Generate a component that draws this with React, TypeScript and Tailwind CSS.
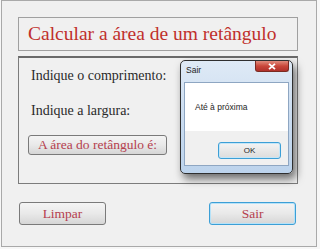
import React from "react";

const serif = "font-['Liberation_Serif',serif]";
const sans = "font-['Liberation_Sans',Arial,sans-serif]";

function WinButton({
  label,
  focused,
  className,
}: {
  label: string;
  focused?: boolean;
  className?: string;
}) {
  return (
    <button
      className={`flex items-center justify-center rounded-[3px] border bg-gradient-to-b from-[#f4f4f4] via-[#e9e9e9] to-[#d6d6d6] text-[#b5404e] ${serif} ${
        focused
          ? "border-[#3c9fd6] shadow-[inset_0_0_0_1px_#b6e2f8]"
          : "border-[#7a7a7a]"
      } ${className ?? ""}`}
    >
      {label}
    </button>
  );
}

export default function App() {
  return (
    <div className="h-[249px] w-[320px] bg-[#f7f7f7] pl-[1px]">
      <div className="relative h-[247px] w-[316px] border border-[#a9a9a9] bg-[#f0f0f0] px-[16px] pt-[16px]">
        {/* título */}
        <div
          className={`flex h-[34px] w-[280px] items-center border border-[#a0a0a0] pl-[9px] text-[19.5px] leading-none text-[#c0302c] ${serif}`}
        >
          Calcular a área de um retângulo
        </div>

        {/* painel */}
        <div className="mt-[5px] h-[128px] w-[280px] border border-t-2 border-[#7c7c7c] border-t-[#6a6a6a] pl-[12px] pt-[9px]">
          <div className={`text-[14px] leading-[18px] text-[#2a2a2a] ${serif}`}>
            Indique o comprimento:
          </div>
          <div className={`mt-[17px] text-[14px] leading-[18px] text-[#2a2a2a] ${serif}`}>
            Indique a largura:
          </div>
          <WinButton
            label="A área do retângulo é:"
            className="-ml-[3px] mt-[15px] h-[20px] w-[139px] text-[13.5px] leading-none"
          />
        </div>

        {/* botões */}
        <div className="mt-[18px] flex w-[280px] justify-between pl-[1px] pr-[2px]">
          <WinButton label="Limpar" className="h-[23px] w-[87px] text-[13.5px] leading-none" />
          <WinButton label="Sair" focused className="h-[23px] w-[87px] text-[13.5px] leading-none" />
        </div>

        {/* caixa de mensagem */}
        <div className="absolute left-[178px] top-[59px] flex h-[114px] w-[113px] flex-col rounded-[5px] border border-[#2f2f2f] bg-gradient-to-b from-[#dfeaf6] via-[#cadcf0] to-[#bcd3ec] px-[3px] pb-[7px] shadow-[3px_5px_8px_rgba(0,0,0,0.55)]">
          <div className="flex h-[21px] items-start justify-between">
            <span className={`mt-[5px] pl-[2px] text-[8.5px] leading-none text-[#1e1e1e] ${sans}`}>
              Sair
            </span>
            <div className="flex h-[11px] w-[34px] items-center justify-center rounded-b-[3px] border border-t-0 border-[#7a2a22] bg-gradient-to-b from-[#e08a7c] via-[#c9473a] to-[#b0302a]">
              <svg width="8" height="7" viewBox="0 0 8 7">
                <path d="M1 0.8 L7 6.2 M7 0.8 L1 6.2" stroke="#ffffff" strokeWidth="1.8" />
              </svg>
            </div>
          </div>
          <div className="flex flex-1 flex-col border border-[#8ea6c2]">
            <div className="flex h-[48px] items-center bg-white pl-[10px]">
              <span className={`text-[8.5px] leading-none text-[#1e1e1e] ${sans}`}>
                Até à próxima
              </span>
            </div>
            <div className="flex flex-1 justify-end bg-[#f0f0f0] pr-[7px] pt-[11px]">
              <div
                className={`flex h-[17px] w-[63px] items-center justify-center rounded-[3px] border border-[#3c9fd6] bg-gradient-to-b from-[#f4f4f4] to-[#dcdcdc] text-[8px] text-[#1e1e1e] shadow-[inset_0_0_0_1px_#c4e6f8] ${sans}`}
              >
                OK
              </div>
            </div>
          </div>
        </div>
      </div>
    </div>
  );
}
